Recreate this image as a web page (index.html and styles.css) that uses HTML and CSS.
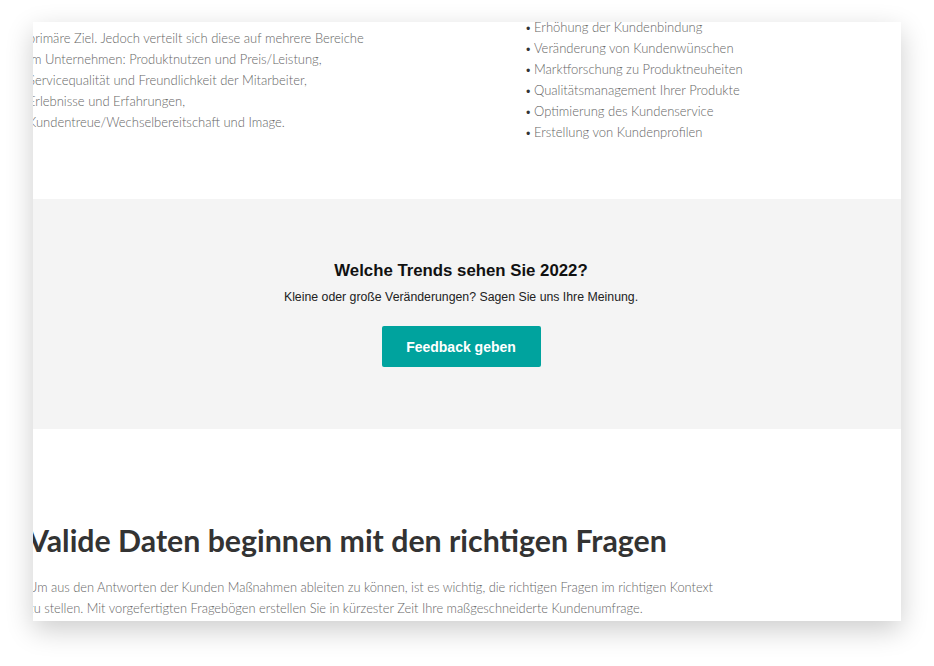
FILE: index.html
```html
<!DOCTYPE html>
<html lang="de">
<head>
<meta charset="utf-8">
<title>Kundenumfrage</title>
<link rel="stylesheet" href="styles.css">
</head>
<body>
<div class="card">
  <section class="intro">
    <p class="intro-text">
      Die Kundenzufriedenheit ist in vielen Unternehmen meist das<br>
      primäre Ziel. Jedoch verteilt sich diese auf mehrere Bereiche<br>
      im Unternehmen: Produktnutzen und Preis/Leistung,<br>
      Servicequalität und Freundlichkeit der Mitarbeiter,<br>
      Erlebnisse und Erfahrungen,<br>
      Kundentreue/Wechselbereitschaft und Image.
    </p>
    <ul class="intro-list">
      <li>Erhöhung der Kundenbindung</li>
      <li>Veränderung von Kundenwünschen</li>
      <li>Marktforschung zu Produktneuheiten</li>
      <li>Qualitätsmanagement Ihrer Produkte</li>
      <li>Optimierung des Kundenservice</li>
      <li>Erstellung von Kundenprofilen</li>
    </ul>
  </section>
  <section class="cta">
    <h2 class="cta-title">Welche Trends sehen Sie 2022?</h2>
    <p class="cta-sub">Kleine oder große Veränderungen? Sagen Sie uns Ihre Meinung.</p>
    <a class="cta-button" href="#">Feedback geben</a>
  </section>
  <section class="questions">
    <h2 class="questions-title">Valide Daten beginnen mit den richtigen Fragen</h2>
    <p class="questions-text">Um aus den Antworten der Kunden Maßnahmen ableiten zu können, ist es wichtig, die richtigen Fragen im richtigen Kontext<br>zu stellen. Mit vorgefertigten Fragebögen erstellen Sie in kürzester Zeit Ihre maßgeschneiderte Kundenumfrage.</p>
  </section>
</div>
</body>
</html>
```
FILE: styles.css
```css
html, body {
  margin: 0;
  padding: 0;
  background: #ffffff;
}
body {
  font-family: Lato, "Open Sans", sans-serif;
  min-height: 666px;
}
.card {
  margin: 22px 0 0 33px;
  width: 868px;
  height: 599px;
  overflow: hidden;
  background: #ffffff;
  box-shadow: 0 9px 26px rgba(0, 0, 0, 0.2);
}
.intro {
  height: 177px;
  display: flex;
  align-items: flex-start;
  overflow: hidden;
}
.intro-text {
  margin: -15px 0 0 -5px;
  width: 497px;
  flex: none;
  font-size: 13px;
  font-weight: 300;
  line-height: 21px;
  color: #666;
  white-space: nowrap;
}
.intro-list {
  margin: -5px 0 0 0;
  padding: 0;
  list-style: none;
  font-size: 13px;
  font-weight: 300;
  line-height: 21px;
  color: #666;
}
.intro-list li::before {
  content: "\2022";
  display: inline-block;
  width: 9px;
  font-size: 11px;
  color: #333;
}
.cta {
  background: #f4f4f4;
  height: 230px;
  box-sizing: border-box;
  padding: 61px 12px 0 0;
  display: flex;
  flex-direction: column;
  align-items: center;
  font-family: "Liberation Sans", Arial, sans-serif;
}
.cta-title {
  margin: 0;
  font-size: 16.8px;
  line-height: 21px;
  font-weight: bold;
  color: #111;
}
.cta-sub {
  margin: 9px 0 0;
  font-size: 12.3px;
  line-height: 14px;
  color: #222;
}
.cta-button {
  margin-top: 22px;
  width: 159px;
  height: 41px;
  box-sizing: border-box;
  display: flex;
  align-items: center;
  justify-content: center;
  background: #00a39e;
  border-radius: 2px;
  color: #ffffff;
  font-size: 14px;
  font-weight: bold;
  text-decoration: none;
}
.questions {
  padding: 93px 0 0 0;
  margin-left: -5px;
}
.questions-title {
  margin: 0;
  font-size: 30.3px;
  line-height: 36px;
  font-weight: bold;
  color: #333;
  white-space: nowrap;
}
.questions-text {
  margin: 19px 0 0;
  font-size: 12.85px;
  font-weight: 300;
  line-height: 21px;
  color: #666;
  white-space: nowrap;
}
```
